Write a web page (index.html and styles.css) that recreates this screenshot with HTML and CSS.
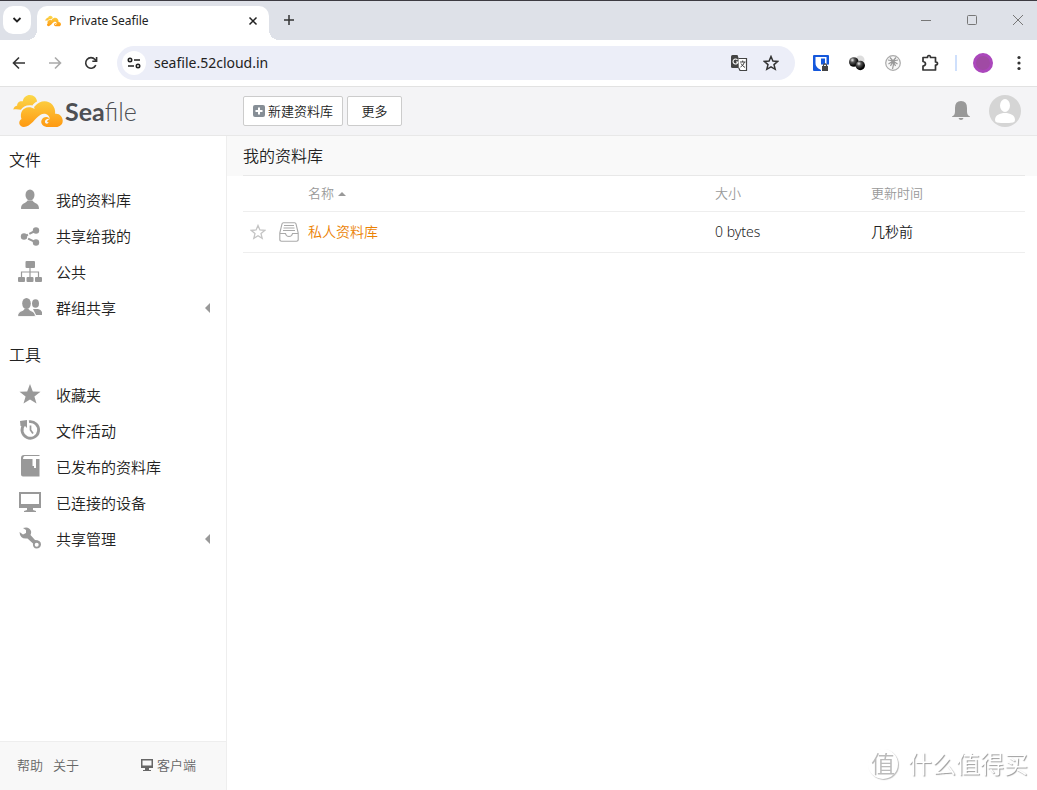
FILE: index.html
```html
<!DOCTYPE html>
<html lang="zh-CN">
<head>
<meta charset="utf-8">
<title>Private Seafile</title>
<link rel="stylesheet" href="styles.css">
</head>
<body>
<svg class="defs" aria-hidden="true">
  <defs>
    <linearGradient id="gold" gradientUnits="userSpaceOnUse" x1="0" y1="0" x2="0" y2="96">
      <stop offset="0" stop-color="#fbd84a"/><stop offset="1" stop-color="#ff9a12"/>
    </linearGradient>
  </defs>
  <symbol id="cloud" viewBox="0 0 150 97">
    <path fill="url(#gold)" d="M0 44C2 36 8 33 12 32C11 23 19 17 29 19C31 7 40 0 50 0C63 0 72 10 72 20C66 23 61 27 58 32C42 29 29 35 23 45C16 43 8 42 0 44Z"/>
    <path fill="url(#gold)" d="M32 97C18 97 13 81 25 73C19 55 28 38 47 37C54 37 59 39 64 42L65 39C62 38 62 37 66 33C74 24 84 19 95 19C114 19 129 35 127 57C140 55 150 66 150 78C150 90 140 97 130 97H101C88 95 82 85 86 76C90 66 103 64 111 72C109 59 95 53 84 59C66 68 54 97 32 97ZM112 73C104 70 95 75 96 82C97 88 106 89 107 82C100 84 102 75 112 73Z"/>
  </symbol>
</svg>

<header class="tabstrip">
  <button class="tab-search" aria-label="Search tabs"><svg width="10" height="8" viewBox="0 0 10 8"><path d="M1.500 2 5 5.500 8.500 2" fill="none" stroke="#222" stroke-width="1.800"/></svg></button>
  <div class="tab">
    <svg width="16" height="12"><use href="#cloud"/></svg>
    <span class="tab-title">Private Seafile</span>
    <button class="plain" aria-label="Close tab"><svg width="10" height="10" viewBox="0 0 10 10"><path d="M1.500 1.500 8.500 8.500M8.500 1.500 1.500 8.500" stroke="#222" stroke-width="1.500"/></svg></button>
  </div>
  <button class="plain new-tab" aria-label="New tab"><svg width="12" height="12" viewBox="0 0 12 12"><path d="M6 1V11M1 6H11" stroke="#333" stroke-width="1.500"/></svg></button>
  <div class="window-buttons">
    <button class="plain" aria-label="Minimize"><svg width="12" height="12" viewBox="0 0 12 12"><path d="M1 6.500H11" stroke="#777"/></svg></button>
    <button class="plain" aria-label="Maximize"><svg width="12" height="12" viewBox="0 0 12 12"><rect x="1.500" y="1.500" width="9" height="9" rx="1" fill="none" stroke="#777"/></svg></button>
    <button class="plain" aria-label="Close"><svg width="12" height="12" viewBox="0 0 12 12"><path d="M1 1 11 11M11 1 1 11" stroke="#777"/></svg></button>
  </div>
</header>

<div class="toolbar">
  <div class="nav-buttons">
    <button class="plain" aria-label="Back"><svg width="14" height="14" viewBox="0 0 14 14"><path d="M13 7H2M7 1.500 1.500 7 7 12.500" fill="none" stroke="#333" stroke-width="1.600"/></svg></button>
    <button class="plain" aria-label="Forward"><svg width="14" height="14" viewBox="0 0 14 14"><path d="M1 7H12M7 1.500 12.500 7 7 12.500" fill="none" stroke="#aaa" stroke-width="1.600"/></svg></button>
    <button class="plain" aria-label="Reload"><svg width="14" height="14" viewBox="0 0 14 14"><path d="M11.800 9.200A5.300 5.300 0 1 1 11 3.500L12.300 5M12.600 1V5.300H8.300" fill="none" stroke="#333" stroke-width="1.600"/></svg></button>
  </div>
  <div class="omnibox">
    <button class="site-info" aria-label="Site information"><svg width="14" height="12" viewBox="0 0 14 12"><g fill="none" stroke="#222" stroke-width="1.600"><circle cx="3" cy="3" r="1.700"/><path d="M7 3H13M1 9H7"/><circle cx="11" cy="9" r="1.700"/></g></svg></button>
    <input class="address" aria-label="Address" value="seafile.52cloud.in">
    <button class="plain" aria-label="Translate"><svg width="18" height="18" viewBox="0 0 18 18"><path d="M1 2.500Q1 1 2.500 1H7.500L12 14H2.500Q1 14 1 12.500Z" fill="#444"/><path d="M8.500 4.500H16.500V16.500H10L8.800 14" fill="#fff" stroke="#444" stroke-width="1.200"/><path d="M7.500 6A2.500 2.500 0 1 0 8 8H6" fill="none" stroke="#fff" stroke-width="1.100"/><path d="M10 8H15.500M12.700 6.500V8M14.500 8Q13.500 11.500 10.500 13M11 9.500Q12.500 12 15 13.500" fill="none" stroke="#444"/></svg></button>
    <button class="plain" aria-label="Bookmark"><svg width="16" height="16" viewBox="0 0 16 16"><path d="M8 1.500 9.900 6 14.700 6.400 11 9.600 12.200 14.300 8 11.800 3.800 14.300 5 9.600 1.300 6.400 6.100 6Z" fill="none" stroke="#333" stroke-width="1.500"/></svg></button>
  </div>
  <div class="extensions">
    <button class="plain" aria-label="Password manager"><svg width="16" height="16" viewBox="0 0 16 16"><rect width="16" height="16" rx="1" fill="#1558dc"/><path d="M2.500 2H13.500V8C13.500 12 10 14 8 15C6 14 2.500 12 2.500 8Z" fill="#fff"/><path d="M8 3.500H12V8Q12 11 8 13Z" fill="#1558dc"/><path d="M8 9.500H16V16H8Z" fill="#fff"/><rect x="9" y="11" width="6" height="5" fill="#444"/><path d="M10.500 11V9.800Q12 7.800 13.500 9.800V11" fill="none" stroke="#444" stroke-width="1.200"/></svg></button>
    <button class="plain" aria-label="Proxy"><svg width="16" height="16" viewBox="0 0 16 16"><defs><radialGradient id="ball" cx=".35" cy=".3" r=".6"><stop offset="0" stop-color="#eee"/><stop offset=".4" stop-color="#555"/><stop offset="1" stop-color="#050505"/></radialGradient></defs><circle cx="11" cy="5" r="4.500" fill="#ddd"/><circle cx="4.800" cy="7" r="4.800" fill="url(#ball)"/><circle cx="11.300" cy="10.500" r="4.700" fill="url(#ball)"/></svg></button>
    <button class="plain" aria-label="Palm"><svg width="16" height="16" viewBox="0 0 16 16"><circle cx="8" cy="8" r="7.300" fill="#f7f7f7" stroke="#aaa" stroke-width="1.200"/><path d="M8 6Q9 10 7.500 14M8 6 3 5M8 6 13 5M8 6 5 2.500M8 6 11 2.500M8 6 3.500 9M8 6 12.500 9M8 6 5.500 11M8 6 10.500 11" fill="none" stroke="#999" stroke-width="1.200"/></svg></button>
    <button class="plain" aria-label="Extensions"><svg width="18" height="18" viewBox="0 0 18 18"><path d="M2 3.500H6.500Q6.500 1.500 8 1.500T9.500 3.500H14.500V8Q16.500 8 16.500 9.500T14.500 11V16H2V12Q4.500 11.500 4.500 9.700T2 7.500Z" fill="none" stroke="#333" stroke-width="1.700" stroke-linejoin="round"/></svg></button>
    <span class="divider"></span>
    <button class="profile" aria-label="Profile"></button>
    <button class="plain" aria-label="Menu"><svg width="4" height="16" viewBox="0 0 4 16"><g fill="#333"><circle cx="2" cy="2.500" r="1.600"/><circle cx="2" cy="8" r="1.600"/><circle cx="2" cy="13.500" r="1.600"/></g></svg></button>
  </div>
</div>

<div class="app-header">
  <a class="logo" href="#"><svg width="50" height="32"><use href="#cloud"/></svg><span><b>Sea</b>file</span></a>
  <div class="actions">
    <button class="btn btn-new"><svg width="12" height="12" viewBox="0 0 12 12"><rect width="12" height="12" rx="2" fill="#868e96"/><path d="M6 2.500V9.500M2.500 6H9.500" stroke="#fff" stroke-width="2"/></svg>新建资料库</button>
    <button class="btn btn-more">更多</button>
  </div>
  <div class="account">
    <button class="plain" aria-label="通知"><svg width="20" height="20" viewBox="0 0 20 20"><path d="M1 15.500Q4 14.500 4 10.500V7Q4 0 10 0T16 7V10.500Q16 14.500 19 15.500V16H1ZM7.500 17H12.500Q12 19 10 19T7.500 17Z" fill="#999"/></svg></button>
    <button class="plain" aria-label="账户"><svg width="32" height="32" viewBox="0 0 32 32"><circle cx="16" cy="16" r="16" fill="#d5d5d5"/><ellipse cx="16" cy="10.500" rx="5" ry="6.500" fill="#fff"/><path d="M6 25C6 20 11 18 16 18S26 20 26 25Q26 27 24 27.500 16 28.500 8 27.500 6 27 6 25Z" fill="#fff"/></svg></button>
  </div>
</div>

<div class="app">
  <aside class="sidebar">
    <nav class="side-nav">
      <h2>文件</h2>
      <ul>
        <li><a href="#"><svg viewBox="0 0 24 24"><ellipse cx="12" cy="7" rx="4.500" ry="5.500" fill="#999"/><path d="M3 20.500C3 15 8 15.500 9.500 12.500H14.500C16 15.500 21 15 21 20.500Q21 21 20 21H4Q3 21 3 20.500Z" fill="#999"/></svg>我的资料库</a></li>
        <li><a href="#"><svg viewBox="0 0 24 24"><path d="M18 6.500 6 12.500 18 18.500" fill="none" stroke="#999" stroke-width="2" stroke-dasharray="7.500 1.500"/><g fill="#999"><circle cx="18" cy="6.500" r="3.200"/><circle cx="6" cy="12.500" r="3.200"/><circle cx="18" cy="18.500" r="3.200"/></g></svg>共享给我的</a></li>
        <li><a href="#"><svg viewBox="0 0 24 24"><g fill="#999"><rect x="7.500" y="1" width="9.500" height="7" rx="1"/><rect y="17" width="7" height="5" rx="1"/><rect x="8.500" y="17" width="7" height="5" rx="1"/><rect x="17" y="17" width="7" height="5" rx="1"/></g><path d="M12 8V17M3.500 17V12H20.500V17" fill="none" stroke="#999" stroke-width="1.200"/></svg>公共</a></li>
        <li><a href="#"><svg viewBox="0 0 24 24"><g fill="#999"><ellipse cx="17.500" cy="7.500" rx="3.500" ry="4.300"/><path d="M15 13H20Q24.500 14 24.500 19H18Z"/><path stroke="#fff" stroke-width=".8" d="M-.4 20.500C0 14 5 16 6.500 12.500H10.500C12 16 17 14 17.400 20.500Z"/><ellipse cx="8.500" cy="7.500" rx="4.300" ry="5.500"/></g></svg>群组共享<i class="arrow"></i></a></li>
      </ul>
      <h2>工具</h2>
      <ul>
        <li><a href="#"><svg viewBox="0 0 24 24"><path d="M12 1 14.800 8.500 22.500 8.700 16.400 13.500 18.500 20.500 12 16.500 5.500 20.500 7.600 13.500 1.500 8.700 9.200 8.500Z" fill="#999"/></svg>收藏夹</a></li>
        <li><a href="#"><svg viewBox="0 0 24 24"><path d="M6 5.500A8.300 8.300 0 1 0 11 2.700" fill="none" stroke="#999" stroke-width="2.800"/><path d="M2 2 9 1V9L7 7H2.500Z" fill="#999"/><path d="M12.500 6.500V11L15 14.500" fill="none" stroke="#999" stroke-width="1.700"/></svg>文件活动</a></li>
        <li><a href="#"><svg viewBox="0 0 24 24"><path d="M6 0H21.500V1H6.500Q5 1.500 5 4H14.500V11H16V13H18V4H21.500V21.500H5Q3 21.500 3 19.500V3Q3 0 6 0Z" fill="#999"/></svg>已发布的资料库</a></li>
        <li><a href="#"><svg viewBox="0 0 24 24"><path fill-rule="evenodd" d="M1 1H23V17H15V19L18 20V21H6V20L9 19V17H1ZM3 3V13H21V3Z" fill="#999"/></svg>已连接的设备</a></li>
        <li><a href="#"><svg viewBox="0 0 24 24"><path fill-rule="evenodd" d="M1.500 5 5 7.500 8 6V3L5 1Q11-1 13 4 13.500 6 12.500 8L17 13Q23 13 23 17.500 22.500 21.500 18.500 21.500 14.500 21 15 16.500L9.500 11.500Q2 12.500 1.500 5ZM18.700 15.700A2 2 0 1 0 18.700 19.700 2 2 0 1 0 18.700 15.700Z" fill="#999"/></svg>共享管理<i class="arrow"></i></a></li>
      </ul>
    </nav>
    <footer class="side-footer">
      <a href="#">帮助</a><a href="#">关于</a>
      <a class="client" href="#"><svg width="14" height="12" viewBox="0 0 14 12"><path fill-rule="evenodd" d="M1 0H13V9H9V11H11V12H3V11H5V9H1ZM2.500 1.500V6.500H11.500V1.500Z" fill="#666"/></svg>客户端</a>
    </footer>
  </aside>
  <main class="main">
    <h1>我的资料库</h1>
    <table class="repos">
      <thead><tr><th class="c-star"></th><th class="c-icon"></th><th class="c-name">名称<i class="sort"></i></th><th class="c-size">大小</th><th class="c-time">更新时间</th></tr></thead>
      <tbody><tr>
        <td class="c-star"><button class="plain" aria-label="收藏"><svg width="16" height="16" viewBox="0 0 16 16"><path d="M8 1.500 9.900 6 14.700 6.400 11 9.600 12.200 14.300 8 11.800 3.800 14.300 5 9.600 1.300 6.400 6.100 6Z" fill="none" stroke="#c4c4c4" stroke-width="1.300"/></svg></button></td>
        <td class="c-icon"><svg width="20" height="20" viewBox="0 0 20 20"><g fill="none" stroke="#aaa" stroke-width="1.100"><path d="M.8 11 3 2Q3.200.8 4.500.8H15.500Q16.800.8 17 2L19.200 11V17.500Q19.200 19.200 17.500 19.200H2.500Q.8 19.200.8 17.500Z"/><path d="M5 3.500H15M4.500 6H15.500M4 8.500H16M1 11.500H6.500Q7 14.500 10 14.500T13.500 11.500H19"/></g></svg></td>
        <td class="c-name"><a href="#">私人资料库</a></td><td>0 bytes</td><td>几秒前</td>
      </tr></tbody>
    </table>
  </main>
</div>
<div class="watermark"><span class="seal">值</span><span>什么值得买</span></div>
</body>
</html>
```
FILE: styles.css
```css
* { box-sizing: border-box; }
body {
  margin: 0;
  min-height: 100vh;
  display: flex;
  flex-direction: column;
  background: #fff;
  color: #222;
  font: 350 14px/20px "Noto Sans", "Noto Sans CJK SC", sans-serif;
}
button, input { font: inherit; color: inherit; }
a { color: inherit; text-decoration: none; }
svg { display: block; flex: none; }
.defs { position: absolute; width: 0; height: 0; }
.plain { display: flex; padding: 0; border: 0; background: none; }

.tabstrip {
  display: flex;
  align-items: center;
  height: 40px;
  padding: 0 13px 0 3px;
  border-top: 1px solid #3d3b42;
  background: #dee1e8;
}
.tab-search {
  display: flex;
  align-items: center;
  justify-content: center;
  width: 28px;
  height: 28px;
  margin-bottom: 2px;
  padding: 0;
  border: 0;
  border-radius: 10px;
  background: #fff;
}
.tab {
  position: relative;
  display: flex;
  align-items: center;
  align-self: flex-end;
  gap: 8px;
  width: 232px;
  height: 34px;
  margin-left: 6px;
  padding: 0 11px 5px 8px;
  border-radius: 10px 10px 0 0;
  background: #fff;
}
.tab::before, .tab::after {
  content: "";
  position: absolute;
  bottom: 0;
  width: 10px;
  height: 10px;
}
.tab::before { left: -10px; background: radial-gradient(circle at 0 0, transparent 10px, #fff 10px); }
.tab::after { right: -10px; background: radial-gradient(circle at 100% 0, transparent 10px, #fff 10px); }
.tab-title { flex: 1; font-size: 12px; font-weight: 400; }
.new-tab { margin: 0 0 2px 14px; }
.window-buttons { display: flex; gap: 34px; margin: 0 0 2px auto; }

.toolbar {
  display: flex;
  align-items: center;
  height: 46px;
  padding: 0 16px 0 12px;
}
.nav-buttons { display: flex; gap: 22px; }
.omnibox {
  display: flex;
  align-items: center;
  flex: 1;
  gap: 15px;
  height: 34px;
  margin: 0 18px 0 19px;
  padding: 0 16px 0 5px;
  border-radius: 17px;
  background: #eceef8;
}
.site-info {
  display: flex;
  align-items: center;
  justify-content: center;
  width: 24px;
  height: 24px;
  padding: 0;
  border: 0;
  border-radius: 50%;
  background: #fff;
}
.address {
  flex: 1;
  min-width: 0;
  margin-left: -7px;
  padding: 0;
  border: 0;
  outline: 0;
  background: none;
  font-size: 14px;
  font-weight: 400;
}
.extensions { display: flex; align-items: center; gap: 20px; }
.divider { width: 2px; height: 16px; margin: 0 -4px; background: #cfe0fc; }
.profile { width: 20px; height: 20px; margin-right: 4px; padding: 0; border: 3px solid #ab47bc; border-radius: 50%; background: #a04aa4; }

.app-header {
  display: flex;
  align-items: center;
  height: 50px;
  padding: 0 16px 0 13px;
  border-top: 1px solid #e2e2e2;
  border-bottom: 1px solid #e8e8e8;
  background: #f4f4f6;
}
.logo {
  display: flex;
  align-items: center;
  gap: 2px;
  width: 230px;
  color: #4d4f53;
  font: 300 25px/28px Lato, sans-serif;
}
.logo b { font-weight: 700; }
.actions { display: flex; gap: 4px; }
.btn {
  display: flex;
  align-items: center;
  justify-content: center;
  gap: 4px;
  height: 30px;
  padding: 0 8px;
  border: 1px solid #ccc;
  border-radius: 2px;
  background: #fff;
  font-size: 13px;
}
.btn-new { width: 100px; gap: 3px; }
.btn-more { width: 55px; }
.account { display: flex; align-items: center; gap: 18px; margin-left: auto; }

.app { display: flex; flex: 1; }
.sidebar {
  display: flex;
  flex-direction: column;
  flex: none;
  width: 227px;
  border-right: 1px solid #eee;
}
.side-nav { flex: 1; padding-top: 12px; }
.side-nav h2 { margin: 0 0 10px 9px; font-size: 16px; font-weight: inherit; line-height: 24px; }
.side-nav ul { margin: 0 0 17px; padding: 0; list-style: none; }
.side-nav a {
  display: flex;
  align-items: center;
  gap: 14px;
  height: 36px;
  padding: 0 16px 0 18px;
  font-size: 15px;
}
.side-nav svg { width: 24px; height: 24px; }
.arrow {
  margin-left: auto;
  border: 5px solid transparent;
  border-left-width: 0;
  border-right-color: #999;
}
.side-footer {
  display: flex;
  align-items: center;
  gap: 10px;
  height: 49px;
  padding: 0 30px 2px 17px;
  border-top: 1px solid #eee;
  background: #f8f8f8;
  color: #666;
  font-size: 13px;
}
.client { display: flex; align-items: center; gap: 3px; margin-left: auto; }

.main { flex: 1; }
.main h1 {
  margin: 0;
  padding: 0 16px;
  background: #f9f9f9;
  font-size: 16px;
  font-weight: inherit;
  line-height: 40px;
}
.repos {
  width: calc(100% - 28px);
  margin: -1px 12px 0 16px;
  border-collapse: collapse;
  border-top: 1px solid #e8e8e8;
  table-layout: fixed;
  text-align: left;
}
.repos th { height: 36px; padding: 0 0 2px; color: #999; font-size: 13px; font-weight: inherit; }
.repos td { height: 41px; padding: 0; font-size: 14px; }
.repos tr { border-bottom: 1px solid #eee; }
.repos .c-star { width: 36px; padding-left: 7px; }
.repos .c-icon { width: 29px; }
.repos .c-size { width: 156px; }
.repos .c-time { width: 154px; }
.repos td.c-name { color: #eb8205; }
.sort {
  display: inline-block;
  margin-left: 4px;
  border: 4px solid transparent;
  border-top-width: 0;
  border-bottom-color: #999;
  vertical-align: 2px;
}

.watermark {
  position: fixed;
  right: 9px;
  bottom: 10px;
  display: flex;
  align-items: center;
  gap: 10px;
  color: #fff;
  font-size: 24px;
  line-height: 32px;
  text-shadow: 1px 1px 1px #999;
}
.seal {
  width: 30px;
  height: 30px;
  border-radius: 50%;
  box-shadow: 1px 1px 1px #bbb;
  color: #bbb;
  line-height: 29px;
  text-align: center;
  text-shadow: none;
}
```
